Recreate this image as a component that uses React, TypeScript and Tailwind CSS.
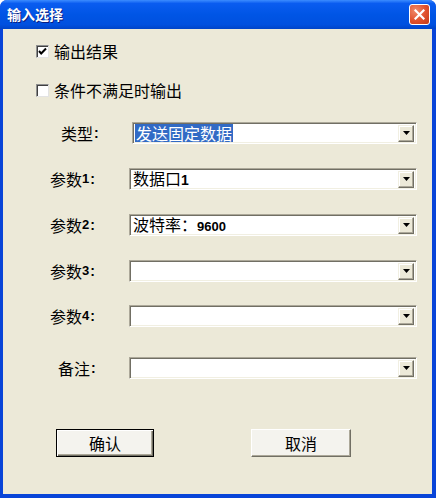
import React from "react";

const cjk = { fontFamily: '"Noto Sans CJK SC", "Liberation Sans", sans-serif' };
const latin = { fontFamily: '"Liberation Sans", "DejaVu Sans", sans-serif' };

function Checkbox({ checked }: { checked: boolean }) {
    return (
        <div className="w-[13px] h-[13px] border border-[#1c5180] bg-white flex items-center justify-center border-t-[#8e8f8f] border-l-[#8e8f8f] border-r-[#e3e3e3] border-b-[#e3e3e3] shadow-[inset_1px_1px_0_#404040]">
            {checked && (
                <svg width="9" height="9" viewBox="0 0 9 9">
                    <path d="M1 4 L3.2 6.5 L8 1.5" stroke="#000" strokeWidth="2" fill="none" />
                </svg>
            )}
        </div>
    );
}

function Combo({ value, selected, ml, width }: { value?: React.ReactNode; selected?: boolean; ml: string; width: string }) {
    return (
        <div className={`h-[22px] ${ml} ${width} bg-white border border-t-[#aca899] border-l-[#aca899] border-r-white border-b-white shadow-[inset_1px_1px_0_#716f64,inset_-1px_-1px_0_#f1efe2] flex items-center pl-[2px] pr-[2px]`}>
            <div className="flex-1 flex items-center h-full">
                {value && (
                    <span
                        className={`text-[16px] leading-[18px] pl-[1px] pr-[1px] ${selected ? "bg-[#316ac5] text-white" : "text-black"}`}
                        style={cjk}
                    >
                        {value}
                    </span>
                )}
            </div>
            <div className="w-[16px] h-[17px] bg-[#ece9d8] border border-t-[#f1efe2] border-l-[#f1efe2] border-r-[#716f64] border-b-[#716f64] shadow-[inset_-1px_-1px_0_#aca899,inset_1px_1px_0_#fff] flex items-center justify-center">
                <svg width="7" height="4" viewBox="0 0 7 4">
                    <path d="M0 0 H7 L3.5 4 Z" fill="#000" />
                </svg>
            </div>
        </div>
    );
}

function Label({ text, num, pl }: { text: string; num?: string; pl: string }) {
    return (
        <div className={`${pl} w-[126px] flex items-center text-[16px] text-black`}>
            <span style={cjk}>{text}</span>
            {num && <span className="text-[13px] font-bold" style={latin}>{num}</span>}
            <span className="text-[14px] font-bold ml-[1px]" style={latin}>:</span>
        </div>
    );
}

export default function App() {
    const rows = [
        { text: "类型", pl: "pl-[58px]", mt: "mt-[22px]", ml: "ml-[3px]", w: "w-[285px]", value: "发送固定数据", selected: true },
        { text: "参数", num: "1", pl: "pl-[47px]", mt: "mt-[24px]", ml: "ml-[0px]", w: "w-[288px]", value: <>数据口<span className="font-bold text-[14px]" style={latin}>1</span></> },
        { text: "参数", num: "2", pl: "pl-[47px]", mt: "mt-[24px]", ml: "ml-[0px]", w: "w-[288px]", value: <>波特率：<span className="font-bold text-[13px]" style={latin}>9600</span></> },
        { text: "参数", num: "3", pl: "pl-[47px]", mt: "mt-[24px]", ml: "ml-[0px]", w: "w-[288px]" },
        { text: "参数", num: "4", pl: "pl-[47px]", mt: "mt-[23px]", ml: "ml-[0px]", w: "w-[288px]" },
        { text: "备注", pl: "pl-[55px]", mt: "mt-[30px]", ml: "ml-[0px]", w: "w-[288px]" },
    ];

    return (
        <div className="w-[436px] h-[498px] bg-[#0844d8] rounded-t-[7px] flex flex-col overflow-hidden">
            <div className="h-[29px] bg-[linear-gradient(#3c8cff_0%,#0a5cf0_12%,#0055e5_50%,#0050df_85%,#0044c8_100%)] flex items-center justify-between pl-[7px] pr-[6px]">
                <span className="text-white font-bold text-[14px] [text-shadow:1px_1px_0_#0a1e80]" style={cjk}>
                    输入选择
                </span>
                <div className="w-[21px] h-[21px] rounded-[3px] border border-white bg-[radial-gradient(circle_at_30%_30%,#f08a6a,#e0502c_55%,#c33b18)] flex items-center justify-center">
                    <svg width="11" height="11" viewBox="0 0 11 11">
                        <path d="M1.5 1.5 L9.5 9.5 M9.5 1.5 L1.5 9.5" stroke="#fff" strokeWidth="2.2" strokeLinecap="square" />
                    </svg>
                </div>
            </div>
            <div className="flex-1 ml-[3px] mr-[4px] mb-[4px] bg-[#ece9d8] flex flex-col">
                <div className="mt-[12px] h-[20px] flex items-center pl-[33px] gap-[5px]">
                    <Checkbox checked />
                    <span className="text-[16px] text-black" style={cjk}>输出结果</span>
                </div>
                <div className="mt-[19px] h-[20px] flex items-center pl-[33px] gap-[5px]">
                    <Checkbox checked={false} />
                    <span className="text-[16px] text-black" style={cjk}>条件不满足时输出</span>
                </div>
                {rows.map((r, idx) => (
                    <div key={idx} className={`${r.mt} h-[22px] flex items-center`}>
                        <Label text={r.text} num={r.num} pl={r.pl} />
                        <Combo value={r.value} selected={r.selected} ml={r.ml} width={r.w} />
                    </div>
                ))}
                <div className="mt-[50px] flex">
                    <button className="ml-[53px] w-[98px] h-[28px] border border-black bg-[#f4f3ee] shadow-[inset_1px_1px_0_#fff,inset_-1px_-1px_0_#716f64,inset_-2px_-2px_0_#aca899] flex items-center justify-center text-[16px] text-black" style={cjk}>
                        确认
                    </button>
                    <button className="ml-[97px] w-[100px] h-[28px] border border-t-white border-l-white border-r-[#716f64] border-b-[#716f64] bg-[#f4f3ee] shadow-[inset_-1px_-1px_0_#aca899] flex items-center justify-center text-[16px] text-black" style={cjk}>
                        取消
                    </button>
                </div>
            </div>
        </div>
    );
}
